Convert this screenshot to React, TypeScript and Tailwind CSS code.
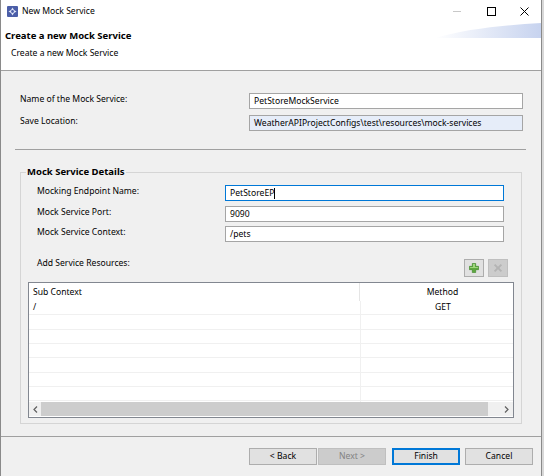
import React from "react";

type FieldProps = {
  value: string;
  width: string;
  focused?: boolean;
  readOnly?: boolean;
};

// SWT-style text box
const Field = ({ value, width, focused, readOnly }: FieldProps) => (
  <div
    className={`${width} h-[16px] flex items-center pl-[4px] border ${
      focused ? "border-[#0078d7]" : "border-[#a5a5a5]"
    } ${readOnly ? "bg-[#e6edf9]" : "bg-white"}`}
  >
    <span className="leading-none">{value}</span>
    {focused && <span className="w-px h-[11px] bg-black" />}
  </div>
);

const AppIcon = () => (
  <svg width="11" height="11" viewBox="0 0 11 11">
    <rect width="11" height="11" rx="1" fill="#4b5ea8" />
    <path d="M5.5 1.5 L7 4 L9.5 5.5 L7 7 L5.5 9.5 L4 7 L1.5 5.5 L4 4 Z" fill="#dfe5f7" />
    <circle cx="5.5" cy="5.5" r="1.4" fill="#4b5ea8" />
  </svg>
);

const PlusIcon = () => (
  <svg width="10" height="10" viewBox="0 0 12 12">
    <path d="M4 0.5 H8 V4 H11.5 V8 H8 V11.5 H4 V8 H0.5 V4 H4 Z" fill="#5ea83f" stroke="#3f8a2a" strokeWidth="0.8" />
    <path d="M4.8 1.3 H7.2 V4.8 H10.7 V6 H1.3 V4.8 H4.8 Z" fill="#9fd67c" />
  </svg>
);

const DeleteIcon = () => (
  <svg width="10" height="10" viewBox="0 0 11 11">
    <path d="M1 2.5 L2.5 1 L5.5 4 L8.5 1 L10 2.5 L7 5.5 L10 8.5 L8.5 10 L5.5 7 L2.5 10 L1 8.5 L4 5.5 Z" fill="#b4b4b4" />
  </svg>
);

const Chevron = ({ dir }: { dir: "left" | "right" }) => (
  <svg width="5" height="7" viewBox="0 0 5 7">
    <path
      d={dir === "left" ? "M4 0.5 L1 3.5 L4 6.5" : "M1 0.5 L4 3.5 L1 6.5"}
      fill="none"
      stroke="#606060"
      strokeWidth="1.2"
    />
  </svg>
);

const rows = ["/", "", "", "", "", "", "", ""];

export default function App() {
  return (
    <div className="flex w-[544px] h-[476px] bg-[#f0f0f0] text-[8.6px] text-black font-['Noto_Sans',sans-serif] overflow-hidden">
      <div className="flex flex-col w-[542px] h-full border-x border-[#8a8a8a]">
        {/* title bar */}
        <div className="h-[23px] bg-white flex items-center">
          <div className="ml-[6px] flex">
            <AppIcon />
          </div>
          <span className="ml-[4px] leading-none">New Mock Service</span>
          <div className="ml-auto flex h-full">
            <div className="w-[34px] flex items-center justify-center">
              <div className="w-[8px] h-px bg-[#c8c8c8]" />
            </div>
            <div className="w-[34px] flex items-center justify-center">
              <div className="w-[9px] h-[9px] border border-black" />
            </div>
            <div className="w-[33px] flex items-center justify-center">
              <svg width="9" height="9" viewBox="0 0 9 9">
                <path d="M0.5 0.5 L8.5 8.5 M8.5 0.5 L0.5 8.5" stroke="#000" strokeWidth="1" />
              </svg>
            </div>
          </div>
        </div>

        {/* wizard banner */}
        <div className="relative h-[48px] bg-white border-b border-[#a0a0a0]">
          <svg className="absolute right-0 top-0" width="106" height="15" viewBox="0 0 106 15">
            <defs>
              <linearGradient id="swoosh" x1="0" x2="1" y1="0" y2="0">
                <stop offset="0" stopColor="#ffffff" />
                <stop offset="1" stopColor="#c7d3ef" />
              </linearGradient>
            </defs>
            <path d="M0 15 C30 6 70 2 106 0 L106 15 Z" fill="url(#swoosh)" />
          </svg>
          <div className="pt-[7px] pl-[4px] leading-[12px] text-[9.5px] font-bold">
            Create a new Mock Service
          </div>
          <div className="mt-[5px] pl-[10px] leading-[12px]">Create a new Mock Service</div>
        </div>

        {/* page body */}
        <div className="flex flex-col flex-1">
          <div className="mt-[22px] flex items-start">
            <div className="w-[248px] pl-[19px] leading-[12px]">Name of the Mock Service:</div>
            <Field value="PetStoreMockService" width="w-[274px]" />
          </div>
          <div className="mt-[6px] flex items-start">
            <div className="w-[248px] pl-[19px] leading-[12px]">Save Location:</div>
            <Field
              value="WeatherAPIProjectConfigs\test\resources\mock-services"
              width="w-[274px]"
              readOnly
            />
          </div>

          <div className="mt-[18px] ml-[14px] w-[511px] h-px bg-[#a0a0a0]" />

          <fieldset className="mt-[16px] ml-[19px] w-[502px] border border-[#d5d5d5] pb-[5px]">
            <legend className="ml-[5px] px-[1px] text-[9.5px] font-bold leading-[12px]">
              Mock Service Details
            </legend>
            <div className="mt-[7px] flex items-start">
              <div className="w-[204px] pl-[16px] leading-[12px]">Mocking Endpoint Name:</div>
              <Field value="PetStoreEP" width="w-[279px]" focused />
            </div>
            <div className="mt-[5px] flex items-start">
              <div className="w-[204px] pl-[16px] leading-[12px]">Mock Service Port:</div>
              <Field value="9090" width="w-[279px]" />
            </div>
            <div className="mt-[4px] flex items-start">
              <div className="w-[204px] pl-[16px] leading-[12px]">Mock Service Context:</div>
              <Field value="/pets" width="w-[279px]" />
            </div>

            <div className="mt-[15px] flex items-start">
              <div className="pl-[16px] leading-[12px]">Add Service Resources:</div>
              <div className="ml-auto mr-[13px] mt-[2px] flex gap-[4px]">
                <div className="w-[20px] h-[18px] flex items-center justify-center bg-[#e1e1e1] border border-[#adadad]">
                  <PlusIcon />
                </div>
                <div className="w-[20px] h-[18px] flex items-center justify-center bg-[#cccccc] border border-[#bfbfbf]">
                  <DeleteIcon />
                </div>
              </div>
            </div>

            {/* resources table */}
            <div className="mt-[5px] ml-[7px] w-[486px] h-[136px] border border-[#828790] bg-white flex flex-col overflow-hidden">
              <div className="h-[18px] flex shrink-0">
                <div className="w-[331px] shrink-0 pl-[4px] flex items-center border-r border-[#e5e5e5]">
                  Sub Context
                </div>
                <div className="w-[165px] shrink-0 flex items-center justify-center">Method</div>
              </div>
              <div className="h-[101px] overflow-hidden">
                {rows.map((sub, i) => (
                  <div key={i} className="h-[14.33px] flex border-b border-[#f0f0f0]">
                    <div className="w-[332px] shrink-0 pl-[4px] flex items-center border-r border-[#f0f0f0]">
                      {sub}
                    </div>
                    <div className="w-[164px] shrink-0 flex items-center justify-center">
                      {i === 0 ? "GET" : ""}
                    </div>
                  </div>
                ))}
              </div>
              <div className="h-[14px] shrink-0 flex bg-[#f0f0f0]">
                <div className="w-[12px] flex items-center justify-center">
                  <Chevron dir="left" />
                </div>
                <div className="w-[447px] bg-[#cdcdcd]" />
                <div className="flex-1" />
                <div className="w-[13px] flex items-center justify-center">
                  <Chevron dir="right" />
                </div>
              </div>
            </div>
          </fieldset>

          <div className="mt-[12px] h-px w-full bg-[#a0a0a0]" />

          {/* wizard buttons */}
          <div className="mt-[11px] pl-[248px] flex">
            <div className="w-[68px] h-[17px] flex items-center justify-center bg-[#e1e1e1] border border-[#adadad]">
              &lt; Back
            </div>
            <div className="w-[68px] h-[17px] ml-px flex items-center justify-center bg-[#cccccc] border border-[#bfbfbf] text-[#838383]">
              Next &gt;
            </div>
            <div className="w-[68px] h-[17px] ml-[6px] flex items-center justify-center bg-[#e1e1e1] border-2 border-[#0078d7]">
              Finish
            </div>
            <div className="w-[68px] h-[17px] ml-[5px] flex items-center justify-center bg-[#e1e1e1] border border-[#adadad]">
              Cancel
            </div>
          </div>
        </div>
      </div>
      <div className="w-[2px] bg-[#d8d8d8]" />
    </div>
  );
}
